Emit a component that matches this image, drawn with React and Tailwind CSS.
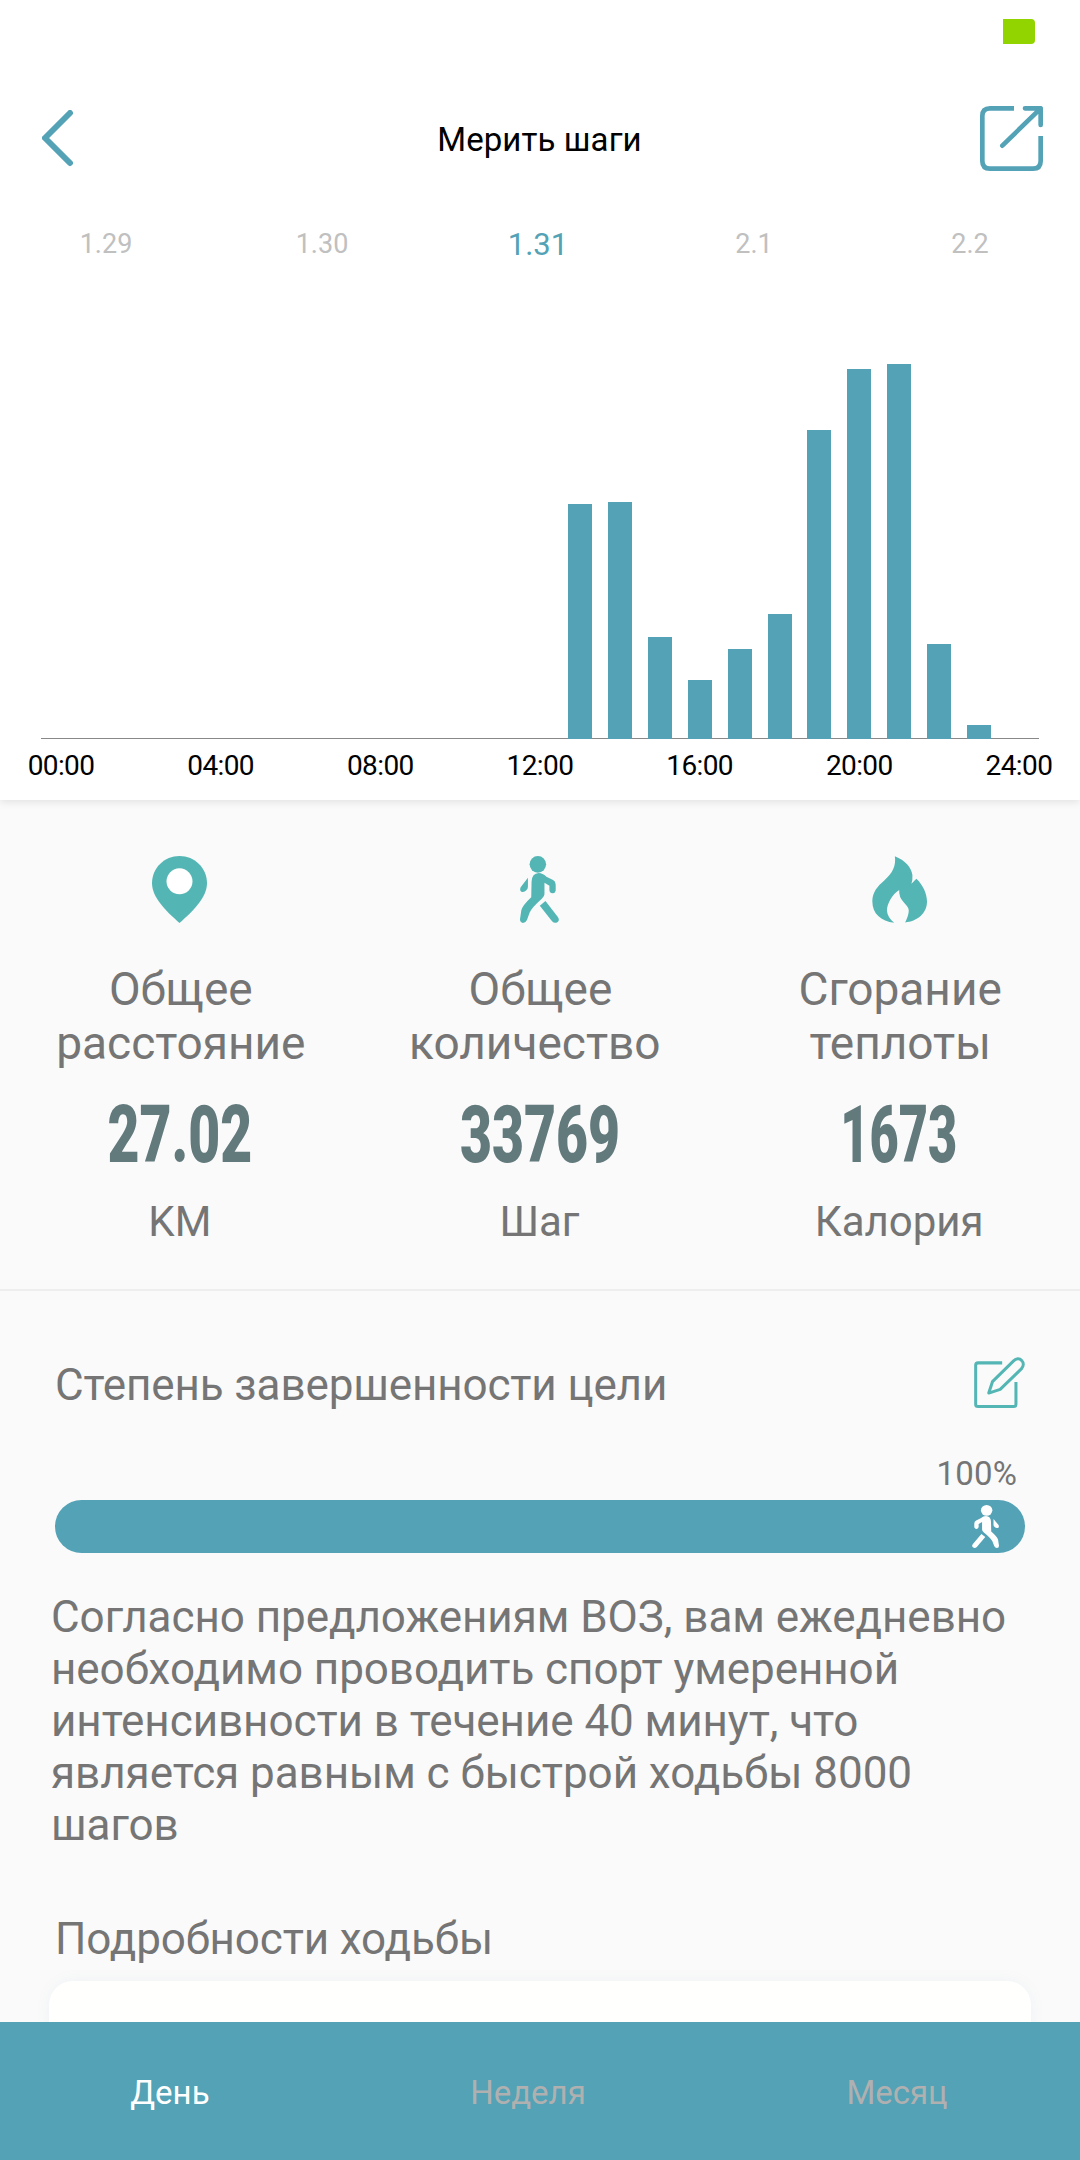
import clsx from 'clsx';

const dates = ['1.29', '1.30', '1.31', '2.1', '2.2'];

// bar height in px for every hour, 00:00 - 24:00
const hours = [
    0, 0, 0, 0, 0, 0, 0, 0, 0, 0, 0, 0, 0, 235, 237, 102, 59, 90, 125, 309,
    370, 375, 95, 14, 0,
];

const hourLabels = ['00:00', '04:00', '08:00', '12:00', '16:00', '20:00', '24:00'];

const tabs = ['День', 'Неделя', 'Месяц'];

function BackIcon() {
    return (
        <svg className="w-8 h-[58px]" viewBox="0 0 32 58" fill="none" stroke="#53a2b6" strokeWidth="6" strokeLinecap="round" strokeLinejoin="round">
            <path d="M28 3 L3 28 L28 53" />
        </svg>
    );
}

function ShareIcon() {
    return (
        <svg className="w-[63px] h-[65px]" viewBox="120 318 189 195" fill="none" stroke="#53a2b6" strokeWidth="14">
            <path d="M222 325H150Q127 325 127 348V483Q127 506 150 506H279Q302 506 302 483V408" />
            <path d="M255 325H302V375M302 325L187 437" strokeLinecap="round" strokeLinejoin="round" />
        </svg>
    );
}

function PinIcon() {
    return (
        <svg className="w-[55px] h-[67px]" viewBox="66 48 165 201">
            <path fill="#53b6b4" d="M148.5 48C194 48 231 84 231 130C231 172 190 213 148.5 249C107 213 66 172 66 130C66 84 103 48 148.5 48Z" />
            <circle cx="148.5" cy="124" r="39" fill="#fff" />
        </svg>
    );
}

function WalkIcon({ className }) {
    return (
        <svg className={className} viewBox="60 48 118 201" fill="currentColor" preserveAspectRatio="none">
            <circle cx="114" cy="73" r="25" />
            <path d="M84 113L62 142Q58 151 64 155Q72 158 80 150Q84 146 84 140Z" />
            <path d="M95 125Q96 100 117 99Q128 99 140 110L160 120Q168 124 168 134V152Q166 160 158 160Q149 159 149 150V137L134 128V163Q134 170 126 176Q95 203 89 218L81 240Q77 249 69 249Q60 248 60 238L64 211Q68 196 94 172Z" />
            <path d="M120 197L137 183L174 230Q181 240 174 246Q165 252 157 244Z" />
        </svg>
    );
}

function FlameIcon() {
    return (
        <svg className="w-[55px] h-[67px]" viewBox="65 48 166 201">
            <path fill="#53b6b4" d="M134 48C165 60 184 82 187 105Q188 120 184 131L199 116C218 134 231 160 231 185C231 222 200 245 165 248Q176 226 176 212C176 202 168 195 160 186Q146 172 147 150C128 162 110 190 110 213Q112 234 132 249C92 244 66 222 66 184C66 156 82 138 102 121C128 98 138 76 134 48Z" />
        </svg>
    );
}

function EditIcon() {
    return (
        <svg className="w-[51px] h-[51px]" viewBox="224 80 152 151" fill="none" stroke="#53b6b4" strokeWidth="9" strokeLinejoin="round">
            <path d="M308 97H236Q229 97 229 104V220Q229 227 236 227H342Q349 227 349 220V154" />
            <path d="M268 187L279 153L342 91C350 83 360 83 366 90C373 97 372 107 365 115L302 176Z" />
        </svg>
    );
}

const stats = [
    { icon: <PinIcon />, label: ['Общее', 'расстояние'], value: '27.02', unit: 'KM', scale: 'scale-x-[0.69]' },
    // the second label line keeps its trailing space
    { icon: <WalkIcon className="w-[39px] h-[67px] text-[#53b6b4]" />, label: ['Общее', 'количество\u00a0'], value: '33769', unit: 'Шаг', scale: 'scale-x-[0.69]' },
    { icon: <FlameIcon />, label: ['Сгорание', 'теплоты'], value: '1673', unit: 'Калория', scale: 'scale-x-[0.63]' },
];

function Chart() {
    return (
        <>
            <div className="h-[469px] mx-[41px] flex items-end border-b border-[#888]">
                {hours.map((height, hour) => (
                    <div key={hour} className="flex-1 flex justify-center -mb-px">
                        <div className="w-6 bg-[#53a2b6]" style={{ height }} />
                    </div>
                ))}
            </div>
            <div className="h-[53px] px-[26px] flex items-center justify-between text-[28px] text-black">
                {hourLabels.map((label) => (
                    <span key={label} className="w-[70px] flex justify-center tracking-[-0.6px]">
                        {label}
                    </span>
                ))}
            </div>
        </>
    );
}

export default function App() {
    return (
        <div className="w-[1080px] h-[2160px] flex flex-col overflow-hidden bg-[#fafafa] font-['Roboto',sans-serif] text-[#757575]">
            <div className="h-[800px] shrink-0 bg-white shadow-[0_2px_8px_rgba(0,0,0,0.1)]">
                <div className="h-[60px] pt-[19px] pr-[45px] flex justify-end">
                    <div className="w-8 h-[25px] bg-[#92d400] rounded-r-[4px]" />
                </div>
                <header className="h-[158px] pl-[42px] pr-[37px] pb-px flex items-center justify-between">
                    <div className="w-[57px]">
                        <BackIcon />
                    </div>
                    <h1 className="pt-0.5 text-[33px] leading-10 tracking-[0.1px] text-black">Мерить шаги</h1>
                    <ShareIcon />
                </header>
                <div className="h-[52px] -ml-0.5 mr-0.5 grid grid-cols-5 items-center text-center">
                    {dates.map((date) => (
                        <span
                            key={date}
                            className={clsx(
                                date === '1.31' ? 'pt-0.5 text-[31px] text-[#53a2b6]' : 'pt-px text-[27px] text-[#c0c0c0]',
                            )}
                        >
                            {date}
                        </span>
                    ))}
                </div>
                <Chart />
            </div>

            <div className="h-[491px] shrink-0 pt-14 pr-px grid grid-cols-3 border-b-2 border-[#eee]">
                {stats.map((stat) => (
                    <div key={stat.unit} className="flex flex-col items-center text-center">
                        {stat.icon}
                        <div className="mt-[39px] pl-0.5 text-[46px] leading-[54px]">
                            {stat.label[0]}
                            <br />
                            {stat.label[1]}
                        </div>
                        <div className={clsx('mt-[25px] text-[80px] leading-[80px] font-black text-[#637a7d]', stat.scale)}>
                            {stat.value}
                        </div>
                        <div className="mt-[22px] text-[42px] leading-[50px]">{stat.unit}</div>
                    </div>
                ))}
            </div>

            <div className="px-[55px] pt-[66px] flex-1 min-h-0">
                <div className="h-[51px] flex items-center justify-between">
                    <h2 className="pt-1 text-[44px] leading-[50px] tracking-[-0.12px]">Степень завершенности цели</h2>
                    <EditIcon />
                </div>
                <div className="mt-[46px] pr-2 text-right text-[33px] leading-10 tracking-[0.2px]">100%</div>
                <div className="mt-1.5 h-[53px] pr-[26px] flex items-center justify-end rounded-full bg-[#53a2b6]">
                    <WalkIcon className="w-[27px] h-[43px] text-white -scale-x-100" />
                </div>
                <p className="mt-[38px] -mx-1 text-[44px] leading-[52px] tracking-[-0.05px]">
                    Согласно предложениям ВОЗ, вам ежедневно
                    <br />
                    необходимо проводить спорт умеренной
                    <br />
                    интенсивности в течение 40 минут, что
                    <br />
                    является равным с быстрой ходьбы 8000
                    <br />
                    шагов
                </p>
                <h2 className="mt-[62px] text-[44px] leading-[52px] tracking-[-0.12px]">Подробности ходьбы</h2>
                <div className="mt-4 -mx-1.5 h-[200px] rounded-[24px] bg-[#fffffd] shadow-[0_0_14px_rgba(120,150,190,0.08)]" />
            </div>

            <nav className="relative h-[138px] shrink-0 pt-[3px] pr-0.5 flex items-center justify-around bg-[#53a2b6] text-[33px]">
                {tabs.map((tab) => (
                    <span key={tab} className={tab === 'День' ? 'text-white' : 'text-[#b0b0b0]'}>
                        {tab}
                    </span>
                ))}
            </nav>
        </div>
    );
}
